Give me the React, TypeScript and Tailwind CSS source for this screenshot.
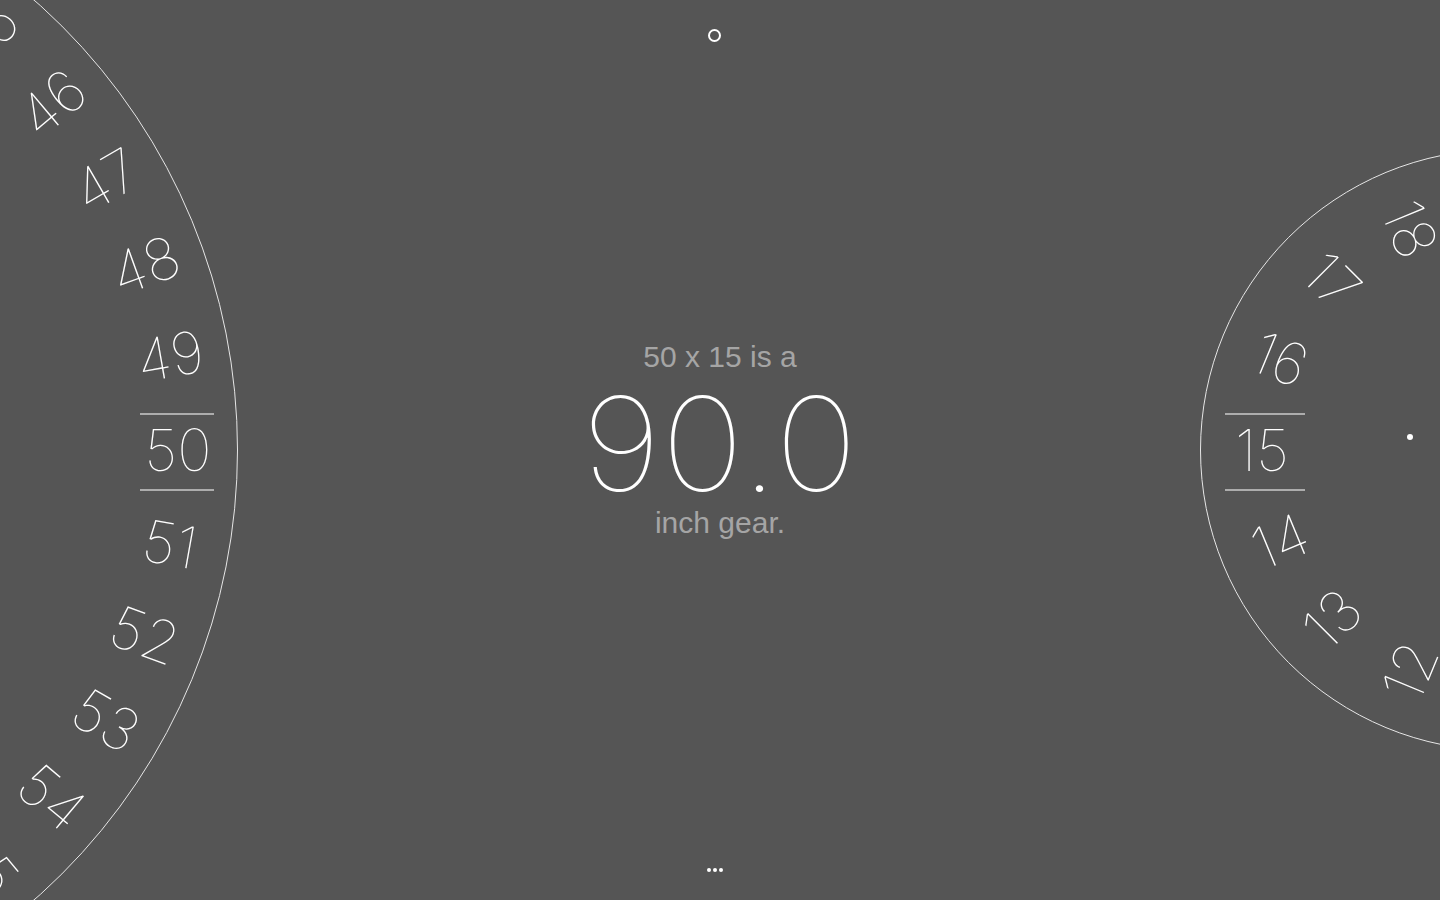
import React from "react";

type DialProps = {
  side: "left" | "right";
  cx: number;
  cy: number;
  radius: number;
  textRadius: number;
  values: number[];
  selected: number;
  step: number;
};

function Dial({ side, cx, cy, radius, textRadius, values, selected, step }: DialProps) {
  return (
    <>
      {/* ring */}
      <div
        className="absolute rounded-full border border-[#e6e6e6]"
        style={{ left: cx - radius, top: cy - radius, width: radius * 2, height: radius * 2 }}
      />
      {values.map((n) => {
        const offset = (n - selected) * step;
        const angle = side === "left" ? offset : 180 + offset;
        const rad = (angle * Math.PI) / 180;
        const x = cx + textRadius * Math.cos(rad);
        const y = cy + textRadius * Math.sin(rad);
        return (
          <div
            key={n}
            className="absolute text-[58px] leading-none font-thin text-white whitespace-nowrap font-['Inter',sans-serif]"
            style={{ left: x, top: y, transform: `translate(-50%, -50%) rotate(${offset}deg)` }}
          >
            {n}
          </div>
        );
      })}
    </>
  );
}

export default function App() {
  return (
    <div className="relative h-screen w-full overflow-hidden bg-[#555555]">
      {/* chainring dial */}
      <Dial
        side="left"
        cx={-362}
        cy={450}
        radius={600}
        textRadius={540}
        values={[44, 45, 46, 47, 48, 49, 50, 51, 52, 53, 54, 55, 56]}
        selected={50}
        step={10}
      />
      <div className="absolute left-[140px] top-[413px] h-[2px] w-[74px] bg-[#adadad]" />
      <div className="absolute left-[140px] top-[489px] h-[2px] w-[74px] bg-[#adadad]" />

      {/* cog dial */}
      <Dial
        side="right"
        cx={1501}
        cy={450}
        radius={301}
        textRadius={239}
        values={[11, 12, 13, 14, 15, 16, 17, 18, 19]}
        selected={15}
        step={22.5}
      />
      <div className="absolute left-[1225px] top-[413px] h-[2px] w-[80px] bg-[#adadad]" />
      <div className="absolute left-[1225px] top-[489px] h-[2px] w-[80px] bg-[#adadad]" />
      <div className="absolute left-[1407px] top-[434px] h-[6px] w-[6px] rounded-full bg-white" />

      <div className="relative flex h-full flex-col items-center">
        <div className="mt-[29px] h-[13px] w-[13px] -translate-x-[6px] rounded-full border-2 border-white" />

        <div className="flex flex-1 flex-col items-center justify-center pb-[31px] font-['Liberation_Sans',Arial,sans-serif]">
          <div className="text-[30px] leading-[36px] text-[#a5a5a5]">50 x 15 is a</div>
          <div className="mt-[14px] scale-x-[1.08] text-[130px] leading-[110px] font-thin text-white font-['Inter',sans-serif]">
            90.0
          </div>
          <div className="mt-[6px] text-[30px] leading-[36px] text-[#a5a5a5]">inch gear.</div>
        </div>

        <div className="mb-[28px] flex -translate-x-[5px] gap-[2px]">
          <span className="h-[4px] w-[4px] rounded-full bg-white" />
          <span className="h-[4px] w-[4px] rounded-full bg-white" />
          <span className="h-[4px] w-[4px] rounded-full bg-white" />
        </div>
      </div>
    </div>
  );
}
